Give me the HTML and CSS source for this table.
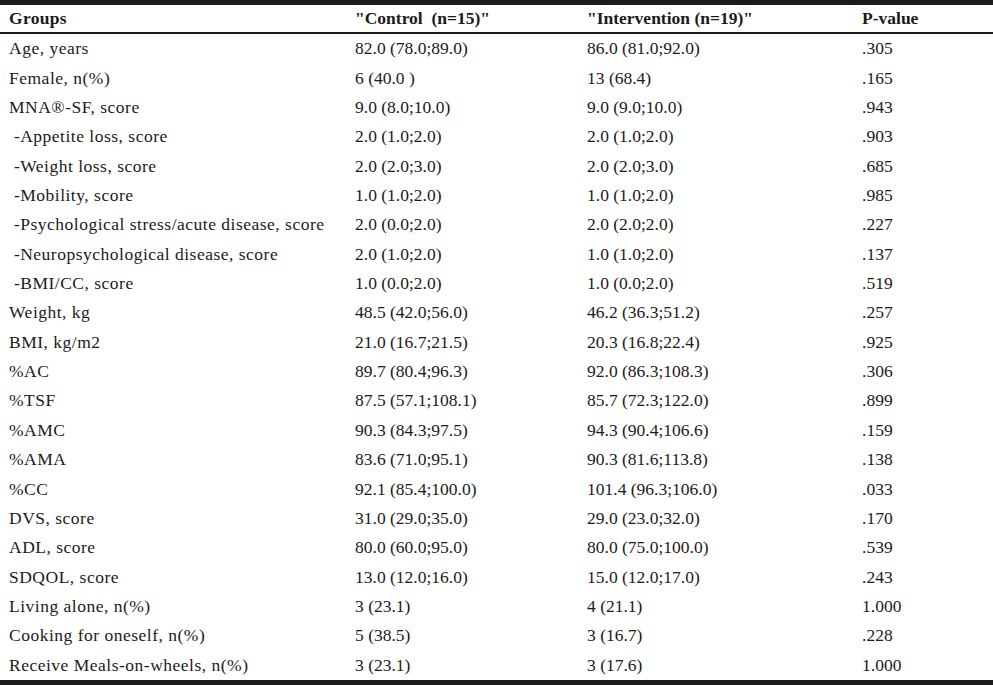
FILE: index.html
```html
<!DOCTYPE html>
<html>
<head>
<meta charset="utf-8">
<link rel="stylesheet" href="styles.css">
</head>
<body>
<table class="data">
  <colgroup>
    <col class="c1"><col class="c2"><col class="c3"><col class="c4">
  </colgroup>
  <thead>
    <tr><th>Groups</th><th>"Control&nbsp; (n=15)"</th><th>"Intervention (n=19)"</th><th>P-value</th></tr>
  </thead>
  <tbody>
    <tr><td>Age, years</td><td>82.0 (78.0;89.0)</td><td>86.0 (81.0;92.0)</td><td>.305</td></tr>
    <tr><td>Female, n(%)</td><td>6 (40.0 )</td><td>13 (68.4)</td><td>.165</td></tr>
    <tr><td>MNA®-SF, score</td><td>9.0 (8.0;10.0)</td><td>9.0 (9.0;10.0)</td><td>.943</td></tr>
    <tr><td>&nbsp;-Appetite loss, score</td><td>2.0 (1.0;2.0)</td><td>2.0 (1.0;2.0)</td><td>.903</td></tr>
    <tr><td>&nbsp;-Weight loss, score</td><td>2.0 (2.0;3.0)</td><td>2.0 (2.0;3.0)</td><td>.685</td></tr>
    <tr><td>&nbsp;-Mobility, score</td><td>1.0 (1.0;2.0)</td><td>1.0 (1.0;2.0)</td><td>.985</td></tr>
    <tr><td>&nbsp;-Psychological stress/acute disease, score</td><td>2.0 (0.0;2.0)</td><td>2.0 (2.0;2.0)</td><td>.227</td></tr>
    <tr><td>&nbsp;-Neuropsychological disease, score</td><td>2.0 (1.0;2.0)</td><td>1.0 (1.0;2.0)</td><td>.137</td></tr>
    <tr><td>&nbsp;-BMI/CC, score</td><td>1.0 (0.0;2.0)</td><td>1.0 (0.0;2.0)</td><td>.519</td></tr>
    <tr><td>Weight, kg</td><td>48.5 (42.0;56.0)</td><td>46.2 (36.3;51.2)</td><td>.257</td></tr>
    <tr><td>BMI, kg/m2</td><td>21.0 (16.7;21.5)</td><td>20.3 (16.8;22.4)</td><td>.925</td></tr>
    <tr><td>%AC</td><td>89.7 (80.4;96.3)</td><td>92.0 (86.3;108.3)</td><td>.306</td></tr>
    <tr><td>%TSF</td><td>87.5 (57.1;108.1)</td><td>85.7 (72.3;122.0)</td><td>.899</td></tr>
    <tr><td>%AMC</td><td>90.3 (84.3;97.5)</td><td>94.3 (90.4;106.6)</td><td>.159</td></tr>
    <tr><td>%AMA</td><td>83.6 (71.0;95.1)</td><td>90.3 (81.6;113.8)</td><td>.138</td></tr>
    <tr><td>%CC</td><td>92.1 (85.4;100.0)</td><td>101.4 (96.3;106.0)</td><td>.033</td></tr>
    <tr><td>DVS, score</td><td>31.0 (29.0;35.0)</td><td>29.0 (23.0;32.0)</td><td>.170</td></tr>
    <tr><td>ADL, score</td><td>80.0 (60.0;95.0)</td><td>80.0 (75.0;100.0)</td><td>.539</td></tr>
    <tr><td>SDQOL, score</td><td>13.0 (12.0;16.0)</td><td>15.0 (12.0;17.0)</td><td>.243</td></tr>
    <tr><td>Living alone, n(%)</td><td>3 (23.1)</td><td>4 (21.1)</td><td>1.000</td></tr>
    <tr><td>Cooking for oneself, n(%)</td><td>5 (38.5)</td><td>3 (16.7)</td><td>.228</td></tr>
    <tr><td>Receive Meals-on-wheels, n(%)</td><td>3 (23.1)</td><td>3 (17.6)</td><td>1.000</td></tr>
  </tbody>
</table>
</body>
</html>
```
FILE: styles.css
```css
html, body {
  margin: 0;
  padding: 0;
  background: #ffffff;
}
body {
  font-family: "Liberation Serif", "DejaVu Serif", serif;
  font-size: 17.5px;
  color: #1c1a1a;
}
.data {
  width: 993px;
  border-collapse: collapse;
  table-layout: fixed;
  border-top: 5px solid #1c1c1c;
  border-bottom: 5px solid #1c1c1c;
}
.c1 { width: 346px; }
.c2 { width: 232px; }
.c3 { width: 275px; }
.c4 { width: 140px; }
.data th {
  text-align: left;
  font-weight: bold;
  height: 27px;
  padding: 0 0 0 9px;
  border-bottom: 2px solid #1c1c1c;
  white-space: nowrap;
}
.data th:first-child {
  letter-spacing: 0.3px;
}
.data td {
  height: 29.36px;
  padding: 0 0 0 9px;
  white-space: pre;
}
.data td:first-child {
  letter-spacing: 0.5px;
}
```
